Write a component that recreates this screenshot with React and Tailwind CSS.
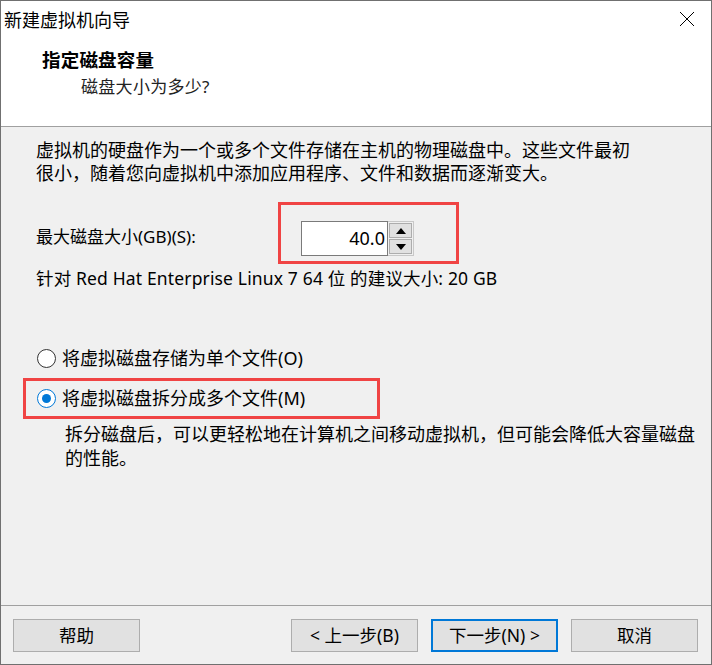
// New VM wizard - "指定磁盘容量" step
import { useState } from 'react'

const sans = "font-['Noto_Sans','Noto_Sans_CJK_SC','Microsoft_YaHei',sans-serif]"

function Radio({ checked, label, onClick }) {
  return (
    <button type="button" onClick={onClick} className="flex items-center h-[23px] gap-[6px] text-left">
      <span
        className={`flex items-center justify-center w-[19px] h-[19px] rounded-full bg-white border ${
          checked ? 'border-[#0078d7]' : 'border-[#333333]'
        }`}
      >
        {checked && <span className="w-[9px] h-[9px] rounded-full bg-[#0078d7]" />}
      </span>
      <span className="text-[18px] leading-[23px] text-black">{label}</span>
    </button>
  )
}

function WinButton({ children, focused }) {
  return (
    <button
      type="button"
      className={`h-[33px] w-[127px] bg-[#e1e1e1] text-[17.5px] leading-[23px] text-black ${
        focused ? 'border-2 border-[#0078d7]' : 'border border-[#adadad]'
      }`}
    >
      {children}
    </button>
  )
}

export default function App() {
  const [split, setSplit] = useState(true)
  const [size, setSize] = useState(40)

  return (
    <div className={`w-[712px] h-[665px] flex flex-col border border-[#707070] bg-[#f0f0f0] text-black ${sans}`}>
      {/* title + header */}
      <div className="bg-white h-[126px] border-b border-[#a0a0a0] flex flex-col">
        <div className="h-[38px] flex items-center justify-between pl-[3px] pr-[16px]">
          <span className="text-[18px] leading-[24px]">新建虚拟机向导</span>
          <svg width="16" height="16" viewBox="0 0 16 16" className="mt-[-2px]">
            <path d="M1 1 L15 15 M15 1 L1 15" stroke="#000" strokeWidth="1" fill="none" />
          </svg>
        </div>
        <div className="pl-[41px] mt-[9px] text-[18.5px] leading-[24px] font-bold tracking-[0.2px]">指定磁盘容量</div>
        <div className="pl-[80px] mt-[3px] text-[17px] leading-[24px] tracking-[0.3px] text-[#222]">磁盘大小为多少?</div>
      </div>

      {/* body */}
      <div className="flex-1 flex flex-col pl-[35px]">
        <p className="mt-[12px] text-[18px] leading-[23px]">
          虚拟机的硬盘作为一个或多个文件存储在主机的物理磁盘中。这些文件最初
          <br />
          很小，随着您向虚拟机中添加应用程序、文件和数据而逐渐变大。
        </p>

        <div className="flex items-center mt-[17px]">
          <span className="w-[242px] text-[17px] leading-[23px] mt-[6px]">最大磁盘大小(GB)(S):</span>
          <div className="border-[3px] border-[#f04444] pt-[16px] pb-[5px] pl-[20px] pr-[42px]">
            <div className="flex h-[35px]">
              <div className="w-[87px] h-full bg-white border border-[#7a7a7a] flex items-center justify-end pr-[2px] text-[18px]">
                {size.toFixed(1)}
              </div>
              <div className="w-[26px] h-full border border-[#c8c8c8] border-l-0 bg-[#f0f0f0] flex flex-col p-[1px] gap-[1px]">
                <button
                  type="button"
                  onClick={() => setSize(size + 1)}
                  className="flex-1 bg-[#e1e1e1] border border-[#adadad] flex items-center justify-center"
                >
                  <svg width="10" height="6" viewBox="0 0 10 6"><path d="M0 6 L5 0 L10 6 Z" fill="#000" /></svg>
                </button>
                <button
                  type="button"
                  onClick={() => setSize(Math.max(1, size - 1))}
                  className="flex-1 bg-[#e1e1e1] border border-[#adadad] flex items-center justify-center"
                >
                  <svg width="10" height="6" viewBox="0 0 10 6"><path d="M0 0 L10 0 L5 6 Z" fill="#000" /></svg>
                </button>
              </div>
            </div>
          </div>
        </div>

        <p className="mt-[3px] text-[17.5px] leading-[23px] tracking-[0.15px]">
          针对 Red Hat Enterprise Linux 7 64 位 的建议大小: 20 GB
        </p>

        <div className="mt-[57px] pl-px">
          <Radio checked={!split} onClick={() => setSplit(false)} label="将虚拟磁盘存储为单个文件(O)" />
        </div>
        <div className="mt-[8px] -ml-[13px] w-[357px] border-[3px] border-[#f04444] h-[41px] pl-[11px] flex items-center">
          <Radio checked={split} onClick={() => setSplit(true)} label="将虚拟磁盘拆分成多个文件(M)" />
        </div>
        <p className="mt-[3px] pl-[29px] text-[18px] leading-[24px]">
          拆分磁盘后，可以更轻松地在计算机之间移动虚拟机，但可能会降低大容量磁盘
          <br />
          的性能。
        </p>
      </div>

      {/* footer */}
      <div className="h-[59px] border-t border-[#a0a0a0] flex items-start pt-[13px] pl-[12px] pr-[13px]">
        <WinButton>帮助</WinButton>
        <div className="flex-1" />
        <div className="flex gap-[13px]">
          <WinButton>&lt; 上一步(B)</WinButton>
          <WinButton focused>下一步(N) &gt;</WinButton>
          <WinButton>取消</WinButton>
        </div>
      </div>
    </div>
  )
}
